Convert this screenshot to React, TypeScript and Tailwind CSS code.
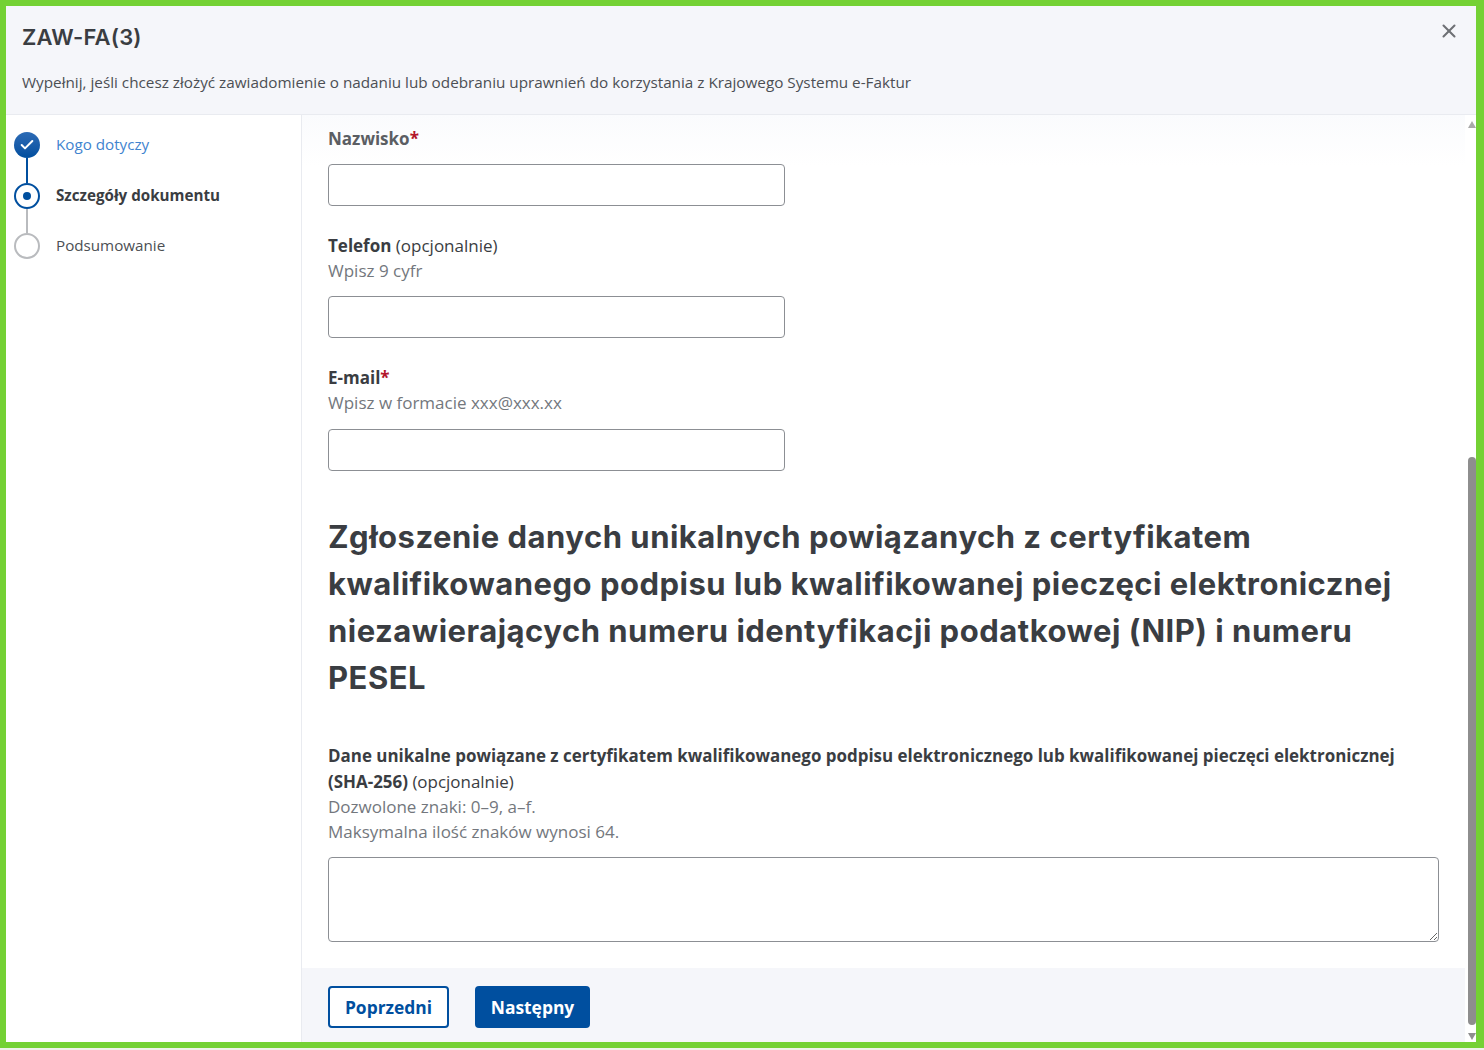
import React from 'react';
import { Check, X } from 'lucide-react';

const sans = { fontFamily: '"Open Sans", sans-serif' };

const Field = ({ children, hint, inputGap }: { children: React.ReactNode; hint?: string; inputGap: string }) => (
  <div className="mb-[26px]">
    <div className="-mb-[1px] pt-[1px] text-[17px] leading-[26px] text-[#3a3d42]">{children}</div>
    {hint && <div className="text-[17px] leading-[26px] text-[#73777d]">{hint}</div>}
    <div className={`${inputGap} h-[42px] w-[457px] rounded-[4px] border border-[#8c8f94] bg-white`} />
  </div>
);

const Stepper = () => (
  <div className="w-[296px] shrink-0 border-r border-[#e9ebf0] bg-white pl-[8px] pt-[17px]">
    <div className="flex h-[26px] items-center">
      <div className="flex h-[26px] w-[26px] items-center justify-center rounded-full bg-gradient-to-b from-[#2c6bb5] to-[#004f9f]">
        <Check className="h-[16px] w-[16px] text-white" strokeWidth={3} />
      </div>
      <span className="ml-[16px] pb-[1px] text-[15.2px] text-[#3f84cf]">Kogo dotyczy</span>
    </div>
    <div className="ml-[12px] h-[25px] w-[2px] bg-[#004f9f]" />
    <div className="flex h-[26px] items-center">
      <div className="flex h-[26px] w-[26px] items-center justify-center rounded-full border-2 border-[#004f9f] bg-white">
        <div className="h-[8px] w-[8px] rounded-full bg-[#004f9f]" />
      </div>
      <span className="ml-[16px] pb-[1px] text-[15.2px] font-bold text-[#3a3d42]">Szczegóły dokumentu</span>
    </div>
    <div className="ml-[12px] h-[24px] w-[2px] bg-[#b9bbbe]" />
    <div className="flex h-[26px] items-center">
      <div className="h-[26px] w-[26px] rounded-full border-2 border-[#b9bbbe] bg-white" />
      <span className="ml-[16px] pb-[1px] text-[15.2px] text-[#4c4f54]">Podsumowanie</span>
    </div>
  </div>
);

const Scrollbar = () => (
  <div className="flex w-[11px] shrink-0 flex-col items-end bg-white pt-[6px] pb-[2px]">
    <div className="h-0 w-0 border-x-[4px] border-b-[7px] border-x-transparent border-b-[#a9a9a9]" />
    <div className="h-[329px]" />
    <div className="w-[8px] flex-1 rounded-[4px] bg-[#8e8e8e]" />
    <div className="mt-[8px] h-0 w-0 border-x-[4px] border-t-[7px] border-x-transparent border-t-[#8e8e8e]" />
  </div>
);

export default function App() {
  return (
    <div className="h-[1050px] w-[1484px] overflow-hidden bg-[#eef2ea]" style={sans}>
      <div className="flex h-[1048px] w-[1484px] flex-col border-t-[6px] border-r-[8px] border-b-[6px] border-l-[6px] border-[#74d134] bg-white">
        <header className="relative h-[109px] shrink-0 border-b border-[#e9ebf0] bg-[#f5f6fa] pl-[16px]">
          <h1
            className="pt-[16px] text-[22px] font-semibold leading-[30px] tracking-[0.2px] text-[#3a3d42]"
            style={{ fontFamily: 'Inter, sans-serif' }}
          >
            ZAW-FA(3)
          </h1>
          <p className="mt-[19px] text-[15.27px] leading-[22px] text-[#4c4f54]">
            Wypełnij, jeśli chcesz złożyć zawiadomienie o nadaniu lub odebraniu uprawnień do korzystania z Krajowego Systemu e-Faktur
          </p>
          <button className="absolute right-[16px] top-[14px] text-[#6e7075]">
            <X className="h-[22px] w-[22px]" strokeWidth={2.25} />
          </button>
        </header>

        <div className="flex min-h-0 flex-1">
          <Stepper />
          <main className="flex min-w-0 flex-1 flex-col">
            <div className="flex-1 bg-gradient-to-b from-[#fafbfd] to-white to-[6%] pl-[26px] pr-[26px] pt-[11px]">
              <div className="mb-[12px] text-[17px] font-bold leading-[26px] text-[#5b5e63]">
                Nazwisko<span className="text-[#b3162b]">*</span>
              </div>
              <div className="mb-[26px] h-[42px] w-[457px] rounded-[4px] border border-[#8c8f94] bg-white" />
              <Field hint="Wpisz 9 cyfr" inputGap="mt-[12px]">
                <b className="font-bold">Telefon</b> (opcjonalnie)
              </Field>
              <Field hint="Wpisz w formacie xxx@xxx.xx" inputGap="mt-[13px]">
                <b className="font-bold">E-mail</b>
                <span className="font-bold text-[#b3162b]">*</span>
              </Field>
              <h2
                className="mt-[42px] text-[31px] font-bold leading-[47px] tracking-[0.5px] text-[#3a3d42]"
                style={{ fontFamily: 'Inter, sans-serif' }}
              >
                Zgłoszenie danych unikalnych powiązanych z certyfikatem kwalifikowanego podpisu lub kwalifikowanej pieczęci elektronicznej niezawierających numeru identyfikacji podatkowej (NIP) i numeru PESEL
              </h2>
              <div className="mt-[42px] text-[16.95px] leading-[25.5px] text-[#3a3d42]">
                <b className="font-bold">
                  Dane unikalne powiązane z certyfikatem kwalifikowanego podpisu elektronicznego lub kwalifikowanej pieczęci elektronicznej (SHA-256)
                </b>{' '}
                (opcjonalnie)
              </div>
              <div className="-mt-[0.5px] text-[17px] leading-[25.6px] text-[#73777d]">
                Dozwolone znaki: 0–9, a–f.
                <br />
                Maksymalna ilość znaków wynosi 64.
              </div>
              <textarea className="mt-[12.8px] block h-[85px] w-full rounded-[4px] border border-[#8c8f94] bg-white" />
            </div>
            <footer className="flex h-[74px] shrink-0 gap-[26px] bg-[#f5f6fa] pl-[26px] pt-[18px]">
              <button className="h-[42px] w-[121px] rounded-[4px] border-2 border-[#004f9f] bg-white text-[17.4px] font-bold text-[#004f9f]">
                Poprzedni
              </button>
              <button className="h-[42px] w-[115px] rounded-[4px] bg-[#004f9f] text-[17.4px] font-bold text-white">
                Następny
              </button>
            </footer>
          </main>
          <Scrollbar />
        </div>
      </div>
    </div>
  );
}
